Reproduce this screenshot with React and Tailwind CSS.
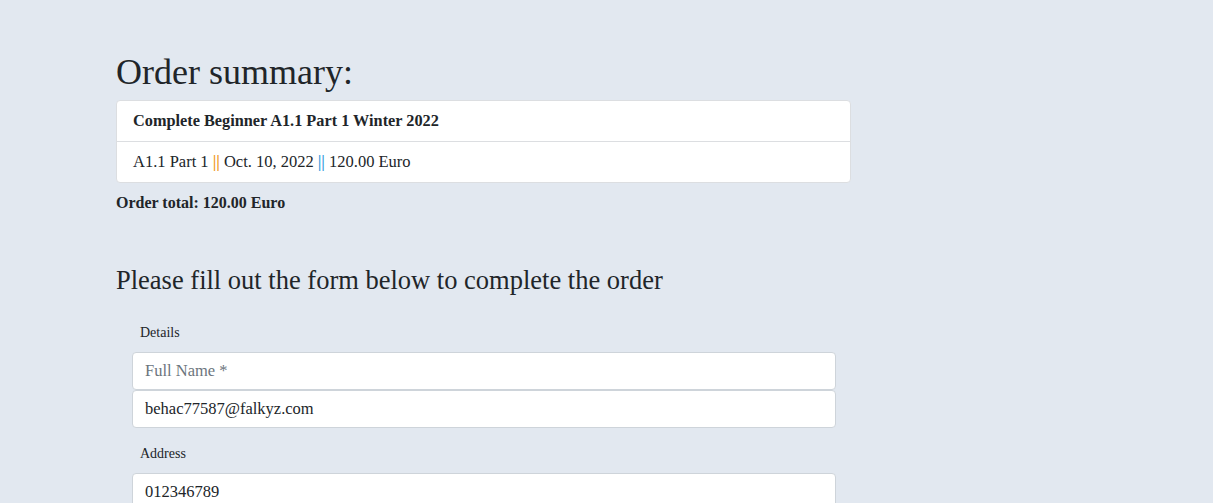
export default function App() {
  const serif = { fontFamily: '"Liberation Serif", "Times New Roman", serif' }
  return (
    <div className="min-h-screen w-full bg-[#e2e8f0] text-[#212529]" style={serif}>
      <div className="w-[851px] pl-[116px] pt-[51px] pb-10">
        <h2 className="mb-[7px] text-[36px] leading-[42px] font-normal">Order summary:</h2>

        <div className="rounded border border-[#dcdee1] bg-white">
          <div className="flex h-[41px] items-center border-b border-[#dcdee1] px-4 text-[16.3px] font-bold">
            Complete Beginner A1.1 Part 1 Winter 2022
          </div>
          <div className="flex h-[40px] items-center px-4 text-[16.5px]">
            <span>A1.1 Part 1</span>
            <span className="mx-1 font-bold text-[#ef9a1f]">||</span>
            <span>Oct. 10, 2022</span>
            <span className="mx-1 font-bold text-[#3d9fe0]">||</span>
            <span>120.00 Euro</span>
          </div>
        </div>

        <p className="mt-2 text-[16px] leading-6 font-bold">Order total: 120.00 Euro</p>

        <h4 className="mt-[51px] text-[26.5px] leading-[29px] font-normal">
          Please fill out the form below to complete the order
        </h4>

        <form className="ml-4 mt-[28px] w-[704px]">
          <div className="mb-[9px] pl-2 text-[14px] leading-5">Details</div>
          <input
            type="text"
            placeholder="Full Name *"
            className="block h-[38px] w-full rounded border border-[#ced4da] bg-white px-3 text-[16.5px] text-[#212529] placeholder:text-[#6c757d] outline-none"
            style={serif}
          />
          <input
            type="email"
            defaultValue="behac77587@falkyz.com"
            className="block h-[38px] w-full rounded border border-[#ced4da] bg-white px-3 text-[16.5px] text-[#212529] outline-none"
            style={serif}
          />

          <div className="mb-[9px] mt-[16px] pl-2 text-[14px] leading-5">Address</div>
          <input
            type="text"
            defaultValue="012346789"
            className="block h-[38px] w-full rounded border border-[#ced4da] bg-white px-3 text-[16.5px] text-[#212529] outline-none"
            style={serif}
          />
          <input
            type="text"
            placeholder="Street"
            className="block h-[38px] w-full rounded border border-[#ced4da] bg-white px-3 text-[16.5px] text-[#212529] placeholder:text-[#6c757d] outline-none"
            style={serif}
          />
        </form>
      </div>
    </div>
  )
}
